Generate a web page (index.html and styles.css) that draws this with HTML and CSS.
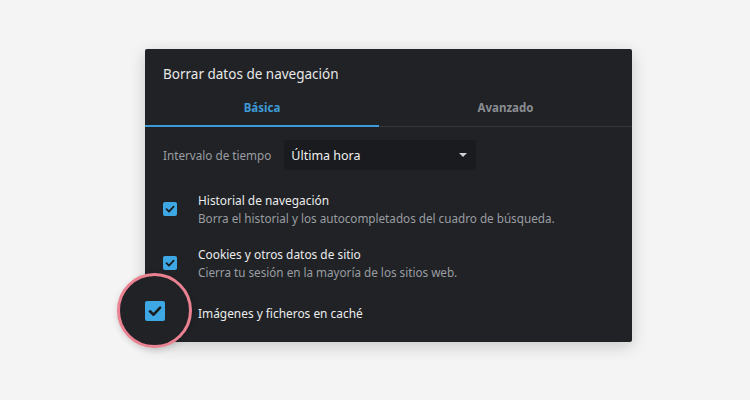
FILE: index.html
```html
<!DOCTYPE html>
<html lang="es">
<head>
  <meta charset="UTF-8">
  <title>Borrar datos de navegación</title>
  <link rel="stylesheet" href="styles.css">
</head>
<body>
  <div class="dialog">
    <div class="title">Borrar datos de navegación</div>
    <div class="tabs">
      <div class="tab active">Básica</div>
      <div class="tab">Avanzado</div>
    </div>
    <div class="content">
      <div class="range">
        <span class="range-label">Intervalo de tiempo</span>
        <div class="select">
          <span>Última hora</span>
          <span class="arrow"></span>
        </div>
      </div>
      <div class="option">
        <span class="check">
          <svg viewBox="0 0 14 14" width="14" height="14"><path d="M3.5 7.2 L6 9.6 L10.6 4.6" fill="none" stroke="#1b1d20" stroke-width="1.8" stroke-linecap="round" stroke-linejoin="round"/></svg>
        </span>
        <div class="text">
          <div class="name">Historial de navegación</div>
          <div class="desc">Borra el historial y los autocompletados del cuadro de búsqueda.</div>
        </div>
      </div>
      <div class="option">
        <span class="check">
          <svg viewBox="0 0 14 14" width="14" height="14"><path d="M3.5 7.2 L6 9.6 L10.6 4.6" fill="none" stroke="#1b1d20" stroke-width="1.8" stroke-linecap="round" stroke-linejoin="round"/></svg>
        </span>
        <div class="text">
          <div class="name">Cookies y otros datos de sitio</div>
          <div class="desc">Cierra tu sesión en la mayoría de los sitios web.</div>
        </div>
      </div>
      <div class="option last">
        <span class="zoom">
          <span class="check big">
            <svg viewBox="0 0 14 14" width="20" height="20"><path d="M3.5 7.2 L6 9.6 L10.6 4.6" fill="none" stroke="#1b1d20" stroke-width="1.8" stroke-linecap="round" stroke-linejoin="round"/></svg>
          </span>
        </span>
        <div class="text">
          <div class="name">Imágenes y ficheros en caché</div>
        </div>
      </div>
    </div>
  </div>
</body>
</html>
```

FILE: styles.css
```css
* {
  box-sizing: border-box;
}

body {
  margin: 0;
  height: 400px;
  background-color: #f4f4f4;
  font-family: "Noto Sans", "Open Sans", sans-serif;
  overflow: hidden;
}

.dialog {
  position: relative;
  width: 487px;
  height: 293px;
  margin: 49px 0 0 145px;
  background-color: #202226;
  border-radius: 2px;
  box-shadow: 0 4px 16px rgba(0, 0, 0, 0.18);
  color: #e6e6e6;
}

.title {
  padding: 16px 18px 0;
  height: 41px;
  font-size: 13.5px;
  color: #e8e8e8;
}

.tabs {
  display: flex;
  border-bottom: 1px solid #34373c;
}

.tab {
  flex: 1;
  text-align: center;
  font-size: 11.5px;
  font-weight: bold;
  color: #8a8d91;
  padding: 10px 0 10px;
  border-bottom: 2px solid transparent;
  margin-bottom: -1px;
}

.tab.active {
  flex: 0 0 234px;
  color: #3d9ad6;
  border-bottom-color: #3d9ad6;
}

.content {
  padding: 13px 18px 0;
}

.range {
  display: flex;
  align-items: center;
  gap: 13px;
}

.range-label {
  font-size: 11.7px;
  color: #9a9da1;
}

.select {
  width: 192px;
  height: 30px;
  display: flex;
  align-items: center;
  justify-content: space-between;
  padding: 0 9px 0 7px;
  background-color: #191b1e;
  border-radius: 3px;
  font-size: 12.5px;
  color: #f0f0f0;
}

.arrow {
  width: 0;
  height: 0;
  border-left: 4.5px solid transparent;
  border-right: 4.5px solid transparent;
  border-top: 4.5px solid #d0d0d0;
}

.option {
  display: flex;
  align-items: center;
  gap: 21px;
  margin-top: 21px;
}

.option + .option {
  margin-top: 18px;
}

.option.last {
  margin-top: 23px;
}

.check {
  width: 14px;
  height: 14px;
  flex-shrink: 0;
  background-color: #3ea8e5;
  border-radius: 2px;
  display: flex;
}

.check.big {
  width: 20px;
  height: 20px;
}

.zoom {
  position: absolute;
  left: -28px;
  top: 224px;
  width: 75px;
  height: 75px;
  border-radius: 50%;
  border: 3px solid #ea8292;
  background-color: #202226;
  display: flex;
  align-items: center;
  justify-content: center;
  box-shadow: 0 2px 6px rgba(0, 0, 0, 0.15);
}

.option.last .text {
  margin-left: 35px;
}

.name {
  font-size: 11.9px;
  color: #ececec;
  line-height: 18px;
}

.desc {
  font-size: 11.7px;
  color: #9a9da1;
  line-height: 18px;
}
```
